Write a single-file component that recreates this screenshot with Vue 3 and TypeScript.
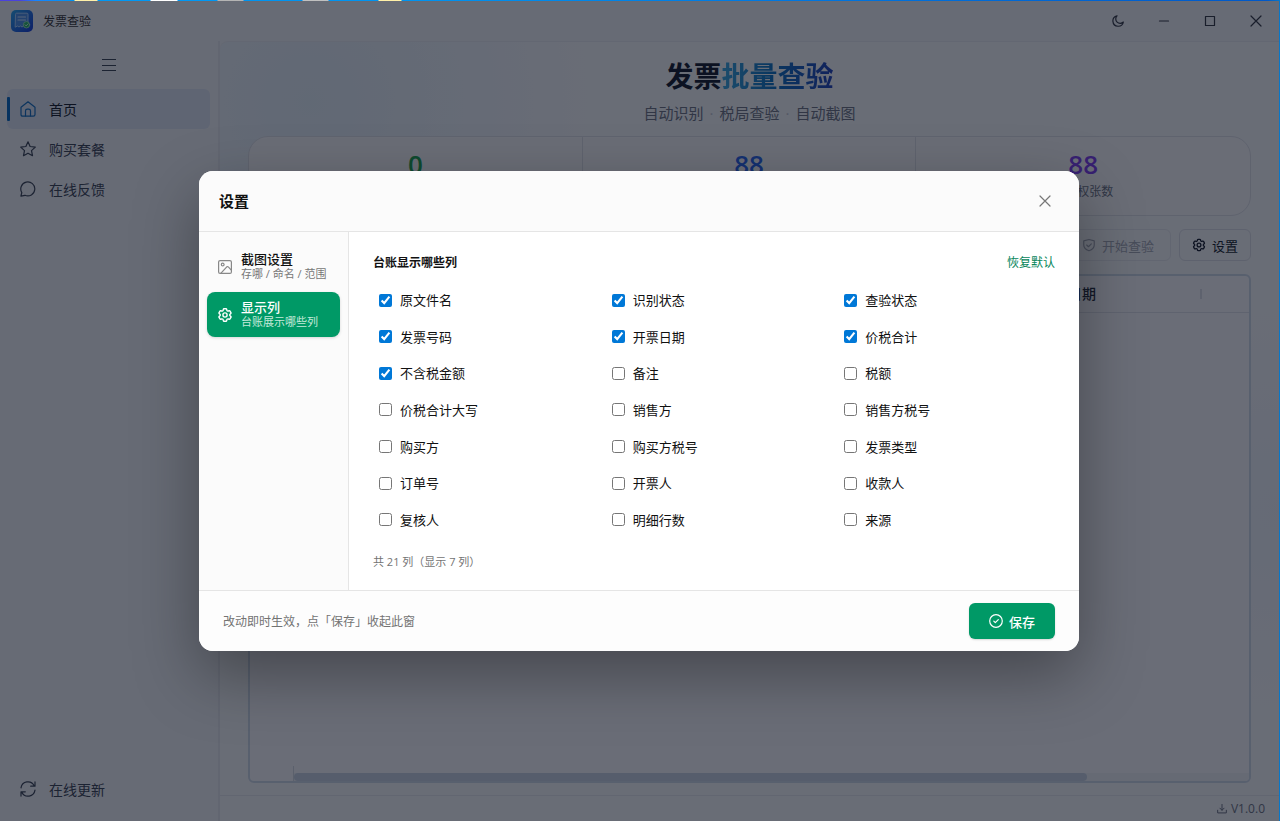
<script setup lang="ts">
import { ref, computed } from 'vue'

interface Column { key: string; label: string; visible: boolean }

const makeColumns = (): Column[] =>
  [
    '原文件名', '识别状态', '查验状态', '发票号码', '开票日期', '价税合计', '不含税金额',
    '备注', '税额', '价税合计大写', '销售方', '销售方税号', '购买方', '购买方税号', '发票类型',
    '订单号', '开票人', '收款人', '复核人', '明细行数', '来源',
  ].map((label, i) => ({ key: 'col-' + i, label, visible: i < 7 }))

const columns = ref<Column[]>(makeColumns())
const shown = computed(() => columns.value.filter((c) => c.visible).length)
const open = ref(true)
const section = ref('columns')
const reset = () => { columns.value = makeColumns() }

const gear =
  'M9.594 3.94c.09-.542.56-.94 1.11-.94h2.593c.55 0 1.02.398 1.11.94l.213 1.281c.063.374.313.686.645.87.074.04.147.083.22.127.325.196.72.257 1.075.124l1.217-.456a1.125 1.125 0 0 1 1.37.49l1.296 2.247a1.125 1.125 0 0 1-.26 1.431l-1.003.827c-.293.241-.438.613-.43.992a7.723 7.723 0 0 1 0 .255c-.008.378.137.75.43.991l1.004.827c.424.35.534.955.26 1.43l-1.298 2.247a1.125 1.125 0 0 1-1.369.491l-1.217-.456c-.355-.133-.75-.072-1.076.124a6.47 6.47 0 0 1-.22.128c-.331.183-.581.495-.644.869l-.213 1.281c-.09.543-.56.94-1.11.94h-2.594c-.55 0-1.019-.398-1.11-.94l-.213-1.281c-.062-.374-.312-.686-.644-.87a6.52 6.52 0 0 1-.22-.127c-.325-.196-.72-.257-1.076-.124l-1.217.456a1.125 1.125 0 0 1-1.369-.49l-1.297-2.247a1.125 1.125 0 0 1 .26-1.431l1.004-.827c.292-.24.437-.613.43-.991a6.932 6.932 0 0 1 0-.255c.007-.38-.138-.751-.43-.992l-1.004-.827a1.125 1.125 0 0 1-.26-1.43l1.297-2.247a1.125 1.125 0 0 1 1.37-.491l1.216.456c.356.133.751.072 1.076-.124.072-.044.146-.086.22-.128.332-.183.582-.495.644-.869l.214-1.28Z'
</script>

<template>
  <div class="desktop">
    <div class="window">
      <header class="titlebar">
        <svg class="logo" viewBox="0 0 22 22" aria-hidden="true">
          <defs>
            <linearGradient id="logo-fill" x1="0" y1="0" x2="1" y2="1">
              <stop offset="0" stop-color="#28a8f0" />
              <stop offset="1" stop-color="#1238d8" />
            </linearGradient>
          </defs>
          <rect width="22" height="22" rx="5" fill="url(#logo-fill)" />
          <path d="M4.500 4.200q0-1 1-1h10.500q1 0 1 1v12.800l-1.500-1-1.500 1-1.500-1-1.500 1-1.500-1-1.500 1-1.500-1-2 1z" fill="#4a90e8" stroke="#a6d0ff" stroke-width="1" />
          <path d="M7 7h7.500M7 10h7.500" stroke="#c8e3ff" stroke-width="1.100" />
          <circle cx="15.500" cy="14.800" r="3.200" fill="#22b866" stroke="#b8f0cc" stroke-width=".7" />
          <path d="m14 14.800 1.100 1.100 2-2.100" fill="none" stroke="#fff" stroke-width=".8" />
        </svg>
        <span class="app-name">发票查验</span>
        <div class="controls">
          <button type="button" aria-label="深色模式">
            <svg class="i12" viewBox="0 0 12 12"><path d="M5 .8A5.300 5.300 0 1 0 11.400 7 4.300 4.300 0 0 1 5 .8Z" /></svg>
          </button>
          <button type="button" aria-label="最小化">
            <svg class="i12" viewBox="0 0 12 12"><path d="M1.500 6h9" /></svg>
          </button>
          <button type="button" aria-label="最大化">
            <svg class="i12" viewBox="0 0 12 12"><path d="M1.500 1.500h9v9h-9z" /></svg>
          </button>
          <button type="button" aria-label="关闭窗口">
            <svg class="i12" viewBox="0 0 12 12"><path d="m1 1 10 10M11 1 1 11" /></svg>
          </button>
        </div>
      </header>

      <div class="shell">
        <aside class="sidebar">
          <button type="button" class="burger" aria-label="折叠菜单">
            <svg class="i14" viewBox="0 0 14 14"><path d="M.5 1.500h13M.5 7.500h13M.5 12.500h13" /></svg>
          </button>
          <nav class="menu">
            <a href="#" class="active">
              <svg class="i16" viewBox="0 0 16 16"><path d="M1 6.300 8 .8l7 5.500V13.500q0 1.700-1.700 1.700H2.700Q1 15.200 1 13.500z" /><path d="M5.500 15V10q0-1.800 1.800-1.800h1.400q1.800 0 1.800 1.800v5" /></svg>
              首页
            </a>
            <a href="#">
              <svg class="i16" viewBox="0 0 16 16"><path d="m8 .8 2.100 4.700 5.200.6-3.800 3.500 1 5.100L8 12.200l-4.500 2.500 1-5.100L.7 6.100l5.200-.6z" /></svg>
              购买套餐
            </a>
            <a href="#">
              <svg class="i16" viewBox="0 0 16 16"><path d="M1.800 11.500A7 7 0 1 1 5 14.300L.9 15.200z" /></svg>
              在线反馈
            </a>
            <a href="#" class="last">
              <svg class="i16" viewBox="0 0 16 16"><path d="M1 6.800A7 7 0 0 1 14.200 4.800M15 .9v4.300h-4.300M15 9.200A7 7 0 0 1 1.800 11.200M1 15.100v-4.300h4.300" /></svg>
              在线更新
            </a>
          </nav>
        </aside>

        <main class="main">
          <div class="page">
            <h1>发票<span>批量查验</span></h1>
            <p class="subtitle"><span>自动识别</span><i>·</i><span>税局查验</span><i>·</i><span>自动截图</span></p>
            <section class="stats">
              <div><b class="green">0</b></div>
              <div><b class="blue">88</b></div>
              <div><b class="purple">88</b><span>总授权张数</span></div>
            </section>
            <div class="toolbar">
              <button type="button" disabled>
                <svg class="i14" viewBox="0 0 24 24"><path d="M12 2.500 21 5v7c0 5-4 8-9 10-5-2-9-5-9-10V5z" /><path d="m8 12 3 3 5-5" /></svg>
                开始查验
              </button>
              <button type="button" @click="open = true">
                <svg class="i14" viewBox="1 1 22 22"><path :d="gear" /><circle cx="12" cy="12" r="3" /></svg>
                设置
              </button>
            </div>
            <div class="ledger">
              <table>
                <thead>
                  <tr><td></td><th scope="col"><span>开票日期</span></th></tr>
                </thead>
              </table>
              <div class="scroll"><span class="pin"></span><span class="track"><span class="thumb"></span></span></div>
            </div>
          </div>
          <footer class="status">
            <svg class="i10" viewBox="0 0 12 12"><path d="M6 .5v7M3.500 5 6 7.500 8.500 5M.8 7.500v3.200h10.400V7.500" /></svg>
            V1.0.0
          </footer>
        </main>
      </div>

      <div v-if="open" class="overlay">
        <section class="dialog" role="dialog" aria-labelledby="dialog-title">
          <header class="dialog-head">
            <h2 id="dialog-title">设置</h2>
            <button type="button" aria-label="关闭" @click="open = false">
              <svg class="i12" viewBox="0 0 12 12"><path d="m1 1 10 10M11 1 1 11" /></svg>
            </button>
          </header>
          <div class="dialog-body">
            <nav class="tabs">
              <button type="button" :class="{ on: section === 'shots' }" @click="section = 'shots'">
                <svg class="i14" viewBox="0 0 14 14"><rect x=".6" y=".6" width="12.800" height="12.800" rx="1.500" /><circle cx="4.700" cy="4.600" r="1.400" /><path d="m3 13.200 5.800-6.400q.8-.6 1.500.1l3 3.200" /></svg>
                <span><b>截图设置</b><small>存哪 / 命名 / 范围</small></span>
              </button>
              <button type="button" :class="{ on: section === 'columns' }" @click="section = 'columns'">
                <svg class="i14" viewBox="2 2 20 20"><path :d="gear" /><circle cx="12" cy="12" r="3" /></svg>
                <span><b>显示列</b><small>台账展示哪些列</small></span>
              </button>
            </nav>
            <div class="pane">
              <div class="pane-head">
                <h3>台账显示哪些列</h3>
                <button type="button" @click="reset">恢复默认</button>
              </div>
              <div class="grid">
                <label v-for="c in columns" :key="c.key">
                  <input v-model="c.visible" type="checkbox" />{{ c.label }}
                </label>
              </div>
              <p class="count">共 {{ columns.length }} 列（显示 {{ shown }} 列）</p>
            </div>
          </div>
          <footer class="dialog-foot">
            <span>改动即时生效，点「保存」收起此窗</span>
            <button type="button" @click="open = false">
              <svg class="i14" viewBox="0 0 14 14"><circle cx="7" cy="7" r="6.300" /><path d="m4.800 7.200 1.500 1.500 3-3" /></svg>
              保存
            </button>
          </footer>
        </section>
      </div>
    </div>
  </div>
</template>

<style>
body { margin: 0; }
</style>

<style scoped>
* { box-sizing: border-box; }
.desktop {
  min-height: 100vh;
  padding: 1px 1px 0 0;
  display: flex;
  background: linear-gradient(90deg, #4a42dc 0 20px, #1684ff 36px, #0094f0 74px, #fff0a8 75px 97px, #0098f4 98px 150px, #fff 151px 177px, #0098f4 178px 217px, #b4b4b4 218px 243px, #0094f0 244px 302px, #c0c0c0 303px 328px, #0094f0 329px 378px, #fff0a8 379px 401px, #0094f0 402px, #0078e0 60%, #0058c8 99%, #0878c8);
  font-family: "Open Sans", "Noto Sans CJK SC", sans-serif;
  color: #111;
}
.window {
  position: relative;
  flex: 1;
  display: flex;
  flex-direction: column;
  background: #f3f4f7;
}
button { font: inherit; color: inherit; border: 0; background: none; padding: 0; cursor: pointer; }
svg { fill: none; stroke: currentColor; stroke-width: 1.2; stroke-linecap: round; stroke-linejoin: round; flex: none; display: block; }
.i10 { width: 10px; height: 10px; }
.i12 { width: 12px; height: 12px; }
.i14 { width: 14px; height: 14px; }
.i16 { width: 16px; height: 16px; }
svg[viewBox="0 0 24 24"], svg[viewBox="1 1 22 22"], svg[viewBox="2 2 20 20"] { stroke-width: 2; }

.titlebar { height: 40px; display: flex; align-items: center; padding-left: 11px; }
.logo { width: 22px; height: 22px; stroke: none; }
.app-name { flex: 1; margin-left: 10px; font-size: 12px; color: #333; }
.controls { display: flex; }
.controls button { width: 46px; height: 40px; display: grid; place-items: center; color: #303540; }

.shell { flex: 1; display: flex; }
.sidebar { width: 220px; padding: 0 8px 12px 7px; display: flex; flex-direction: column; border-right: 2px solid #e6e8ed; }
.burger { height: 48px; display: grid; place-items: center; color: #374151; }
.menu { flex: 1; display: flex; flex-direction: column; }
.menu a { position: relative; height: 40px; display: flex; align-items: center; gap: 13px; padding-left: 13px; font-size: 14px; color: #374151; text-decoration: none; border-radius: 6px; }
.menu .active { background: #dee5f3; color: #111827; }
.menu .active svg { color: #0f6cbd; }
.menu .active::before { content: ""; position: absolute; left: 0; top: 8px; bottom: 8px; width: 3px; background: #0067c0; border-radius: 1px; }
.menu .last { margin-top: auto; }

.main {
  flex: 1;
  min-width: 0;
  display: flex;
  flex-direction: column;
  border-top: 1px solid #e9ebef;
  border-top-left-radius: 8px;
  background:
    radial-gradient(circle at 90px 60px, rgba(190, 220, 238, .35), transparent 280px),
    radial-gradient(circle at 100% 60%, rgba(200, 220, 240, .2), transparent 200px),
    #f8f9fb;
}
.page { flex: 1; display: flex; flex-direction: column; padding: 14px 28px 12px; }
h1 { margin: 0; font-size: 28px; line-height: 40px; font-weight: 700; text-align: center; color: #0f172a; }
h1 span { background: linear-gradient(90deg, #38a8e0, #0870c0 45%, #1e40b8); -webkit-background-clip: text; background-clip: text; color: transparent; }
.subtitle { margin: 6px 0 12px; display: flex; justify-content: center; font-size: 15px; line-height: 22px; color: #6b7280; }
.subtitle i { width: 16px; text-align: center; font-style: normal; color: #c3c7cf; }
.stats { display: grid; grid-template-columns: repeat(3, 1fr); height: 80px; border: 1px solid #dfe1e6; border-radius: 20px; background: #f9f9fb; }
.stats div { display: flex; flex-direction: column; align-items: center; padding-top: 10px; border-right: 1px solid #dfe1e6; }
.stats div:last-child { border-right: 0; }
.stats b { font-size: 26px; line-height: 34px; font-weight: 600; }
.stats span { font-size: 12px; line-height: 22px; color: #6b7280; }
.green { color: #16a34a; }
.blue { color: #2563eb; }
.purple { color: #7c3aed; }
.toolbar { display: flex; justify-content: flex-end; gap: 8px; margin: 13px 0; }
.toolbar button { height: 32px; display: flex; align-items: center; gap: 6px; padding: 0 12px; border: 1px solid #dcdfe5; border-radius: 6px; font-size: 13px; color: #111827; }
.toolbar button:disabled { padding: 0 16px; color: #a3a8b2; border-color: #e7e9ed; }
.ledger { flex: 1; display: flex; flex-direction: column; justify-content: space-between; border: 2px solid #ced9e6; border-radius: 6px; background: #fafbfd; overflow: hidden; }
table { width: 100%; border-collapse: collapse; table-layout: fixed; }
thead tr { border-bottom: 1px solid #dfe2e8; }
th { width: 219px; height: 36px; padding: 0 47px 0 10px; text-align: left; font-size: 14px; font-weight: 500; color: #1f2937; }
th span { display: block; line-height: 10px; border-right: 2px solid #dcdfe5; }
.scroll { display: flex; height: 15px; align-items: flex-end; }
.pin { width: 44px; height: 15px; border-right: 1px solid #d5dae2; }
.track { flex: 1; height: 8px; background: #eff2f6; }
.thumb { display: block; width: 83%; height: 8px; border-radius: 4px; background: #c7d2e0; }
.status { height: 26px; display: flex; align-items: center; justify-content: flex-end; gap: 4px; padding-right: 14px; border-top: 1px solid #e6e8ed; font-size: 12px; color: #6b7280; }

.overlay { position: absolute; inset: 0; display: grid; place-items: center; padding-right: 1px; background: rgba(10, 15, 30, .6); }
.dialog { width: 880px; max-width: 90%; height: 480px; display: flex; flex-direction: column; border-radius: 14px; background: #fff; overflow: hidden; box-shadow: 0 24px 64px rgba(0, 0, 0, .35); }
.dialog-head { height: 61px; display: flex; align-items: center; justify-content: space-between; padding: 0 20px; background: #fbfbfb; border-bottom: 1px solid #e5e5e5; }
h2 { margin: 0; font-size: 15px; line-height: 24px; font-weight: 600; }
.dialog-head button { width: 28px; height: 28px; display: grid; place-items: center; color: #777; }
.dialog-body { flex: 1; min-height: 0; display: flex; }
.tabs { width: 150px; padding: 12px 8px; display: flex; flex-direction: column; gap: 3px; background: #fbfbfb; border-right: 1px solid #e5e5e5; }
.tabs button { height: 45px; display: flex; align-items: center; gap: 9px; padding: 0 11px; border-radius: 8px; text-align: left; white-space: nowrap; }
.tabs svg { color: #888; }
.tabs b { display: block; font-size: 13px; line-height: 15px; font-weight: 500; }
.tabs small { display: block; font-size: 11px; line-height: 14px; color: #777; }
.tabs .on { background: #009966; color: #fff; box-shadow: 0 1px 3px rgba(0, 0, 0, .15); }
.tabs .on svg { color: #fff; }
.tabs .on small { color: #c4e9da; }
.pane { flex: 1; display: flex; flex-direction: column; padding: 20px 24px; }
.pane-head { height: 20px; display: flex; align-items: center; justify-content: space-between; margin-bottom: 14px; }
h3 { margin: 0; font-size: 12px; font-weight: 600; }
.pane-head button { font-size: 12px; color: #07865a; }
.grid { flex: 1; display: grid; grid-template-columns: repeat(3, 1fr); grid-auto-rows: 1fr; gap: 8px 16px; }
.grid label { display: flex; align-items: center; gap: 8px; padding: 0 6px; font-size: 13px; line-height: 20px; }
.grid input { width: 13px; height: 13px; margin: 0; accent-color: #0078d7; }
.count { margin: 20px 0 0; font-size: 11px; line-height: 16px; color: #737373; }
.dialog-foot { height: 61px; display: flex; align-items: center; justify-content: space-between; padding: 0 24px; background: #fdfdfd; border-top: 1px solid #e5e5e5; font-size: 12px; color: #737373; }
.dialog-foot button { height: 36px; display: flex; align-items: center; gap: 6px; padding: 0 20px; border-radius: 6px; background: #009966; color: #fff; font-size: 13px; font-weight: 500; box-shadow: 0 1px 2px rgba(0, 0, 0, .15); }
</style>
